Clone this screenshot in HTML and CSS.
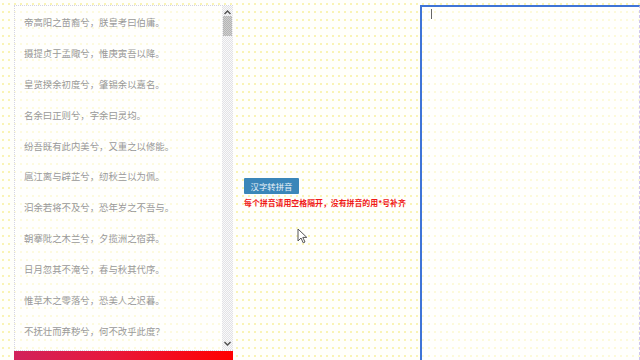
FILE: index.html
```html
<!DOCTYPE html>
<html lang="zh">
<head>
<meta charset="utf-8">
<title>汉字转拼音</title>
<link rel="stylesheet" href="styles.css">
</head>
<body>
<div class="page">
  <div class="left">
    <div class="editor">
      <div class="text">
        <p>帝高阳之苗裔兮，朕皇考曰伯庸。</p>
        <p>摄提贞于孟陬兮，惟庚寅吾以降。</p>
        <p>皇览揆余初度兮，肇锡余以嘉名。</p>
        <p>名余曰正则兮，字余曰灵均。</p>
        <p>纷吾既有此内美兮，又重之以修能。</p>
        <p>扈江离与辟芷兮，纫秋兰以为佩。</p>
        <p>汩余若将不及兮，恐年岁之不吾与。</p>
        <p>朝搴阰之木兰兮，夕揽洲之宿莽。</p>
        <p>日月忽其不淹兮，春与秋其代序。</p>
        <p>惟草木之零落兮，恐美人之迟暮。</p>
        <p>不抚壮而弃秽兮，何不改乎此度？</p>
      </div>
      <div class="scroll">
        <svg class="arrow" width="7" height="5" viewBox="0 0 7 5"><path d="M0.5 4 L3.5 1 L6.5 4" fill="none" stroke="#505050" stroke-width="1.4"/></svg>
        <div class="track"><div class="thumb"></div></div>
        <svg class="arrow" width="7" height="5" viewBox="0 0 7 5"><path d="M0.5 1 L3.5 4 L6.5 1" fill="none" stroke="#505050" stroke-width="1.4"/></svg>
      </div>
    </div>
    <div class="redbar"></div>
  </div>
  <div class="mid">
    <button class="btn">汉字转拼音</button>
    <div class="hint">每个拼音请用空格隔开，没有拼音的用*号补齐</div>
  </div>
  <div class="right">
    <span class="caret"></span>
  </div>
</div>
<svg class="pointer" width="11" height="16" viewBox="0 0 11 16"><path d="M1 1 L1 13 L4 10 L6.2 14.8 L8 14 L5.8 9.4 L9.8 9.4 Z" fill="#fff" stroke="#555" stroke-width="1"/></svg>
</body>
</html>
```
FILE: styles.css
```css
html, body {
  margin: 0;
  padding: 0;
  height: 360px;
  overflow: hidden;
}
body {
  font-family: "Noto Sans CJK SC", "Noto Sans", sans-serif;
  background-color: #fffffb;
  background-image: radial-gradient(circle, #f8f09c 0.6px, transparent 1px);
  background-size: 6px 8px;
  position: relative;
}
.page {
  display: flex;
  padding-top: 5px;
  height: 355px;
  overflow: hidden;
}
.left {
  margin-left: 14px;
  width: 219px;
  display: flex;
  flex-direction: column;
}
.editor {
  height: 344px;
  border: 1px dotted #d4d4e4;
  border-right: none;
  display: flex;
  background: rgba(255,255,255,0.55);
}
.text {
  flex: 1;
  padding: 9px 0 0 9px;
  font-size: 9.4px;
  color: #999;
}
.text p {
  margin: 0 0 15.45px;
  line-height: 15.45px;
  white-space: nowrap;
}
.scroll {
  width: 11px;
  display: flex;
  flex-direction: column;
  align-items: center;
  background: repeating-conic-gradient(#e2e2e6 0 25%, #fafafa 0 50%) 0 0 / 2px 2px;
}
.arrow {
  display: block;
  margin: 4px 0 1px;
}
.scroll .arrow:last-child {
  margin: 1px 0 4px;
}
.track {
  flex: 1;
  width: 100%;
}
.thumb {
  margin: 0 1px;
  height: 20px;
  background: repeating-conic-gradient(#b4b4b4 0 25%, #cfcfcf 0 50%) 0 0 / 2px 2px;
}
.redbar {
  height: 10px;
  background: linear-gradient(90deg, #d1225c 0%, #e8183a 45%, #ff0000 100%);
}
.mid {
  width: 187px;
  padding: 173px 0 0 11px;
  box-sizing: border-box;
}
.btn {
  display: block;
  width: 55px;
  height: 16px;
  padding: 0;
  border: none;
  border-radius: 1px;
  background: #3a86b9;
  color: #e8f1f8;
  font-family: "Noto Sans CJK SC", sans-serif;
  font-size: 8.4px;
  line-height: 16px;
}
.hint {
  margin-top: 3px;
  color: #f01818;
  font-size: 7.9px;
  font-weight: bold;
  line-height: 12px;
  white-space: nowrap;
}
.right {
  flex: 1;
  border-top: 2px solid #3f74d6;
  border-left: 2px solid #3f74d6;
  border-right: 1px dashed #cfc6ee;
  background: rgba(255,255,255,0.5);
  padding: 1px 0 0 9px;
}
.caret {
  display: block;
  width: 1px;
  height: 10px;
  background: #666;
  margin-top: 1px;
}
.pointer {
  position: absolute;
  left: 297px;
  top: 228px;
}
```
